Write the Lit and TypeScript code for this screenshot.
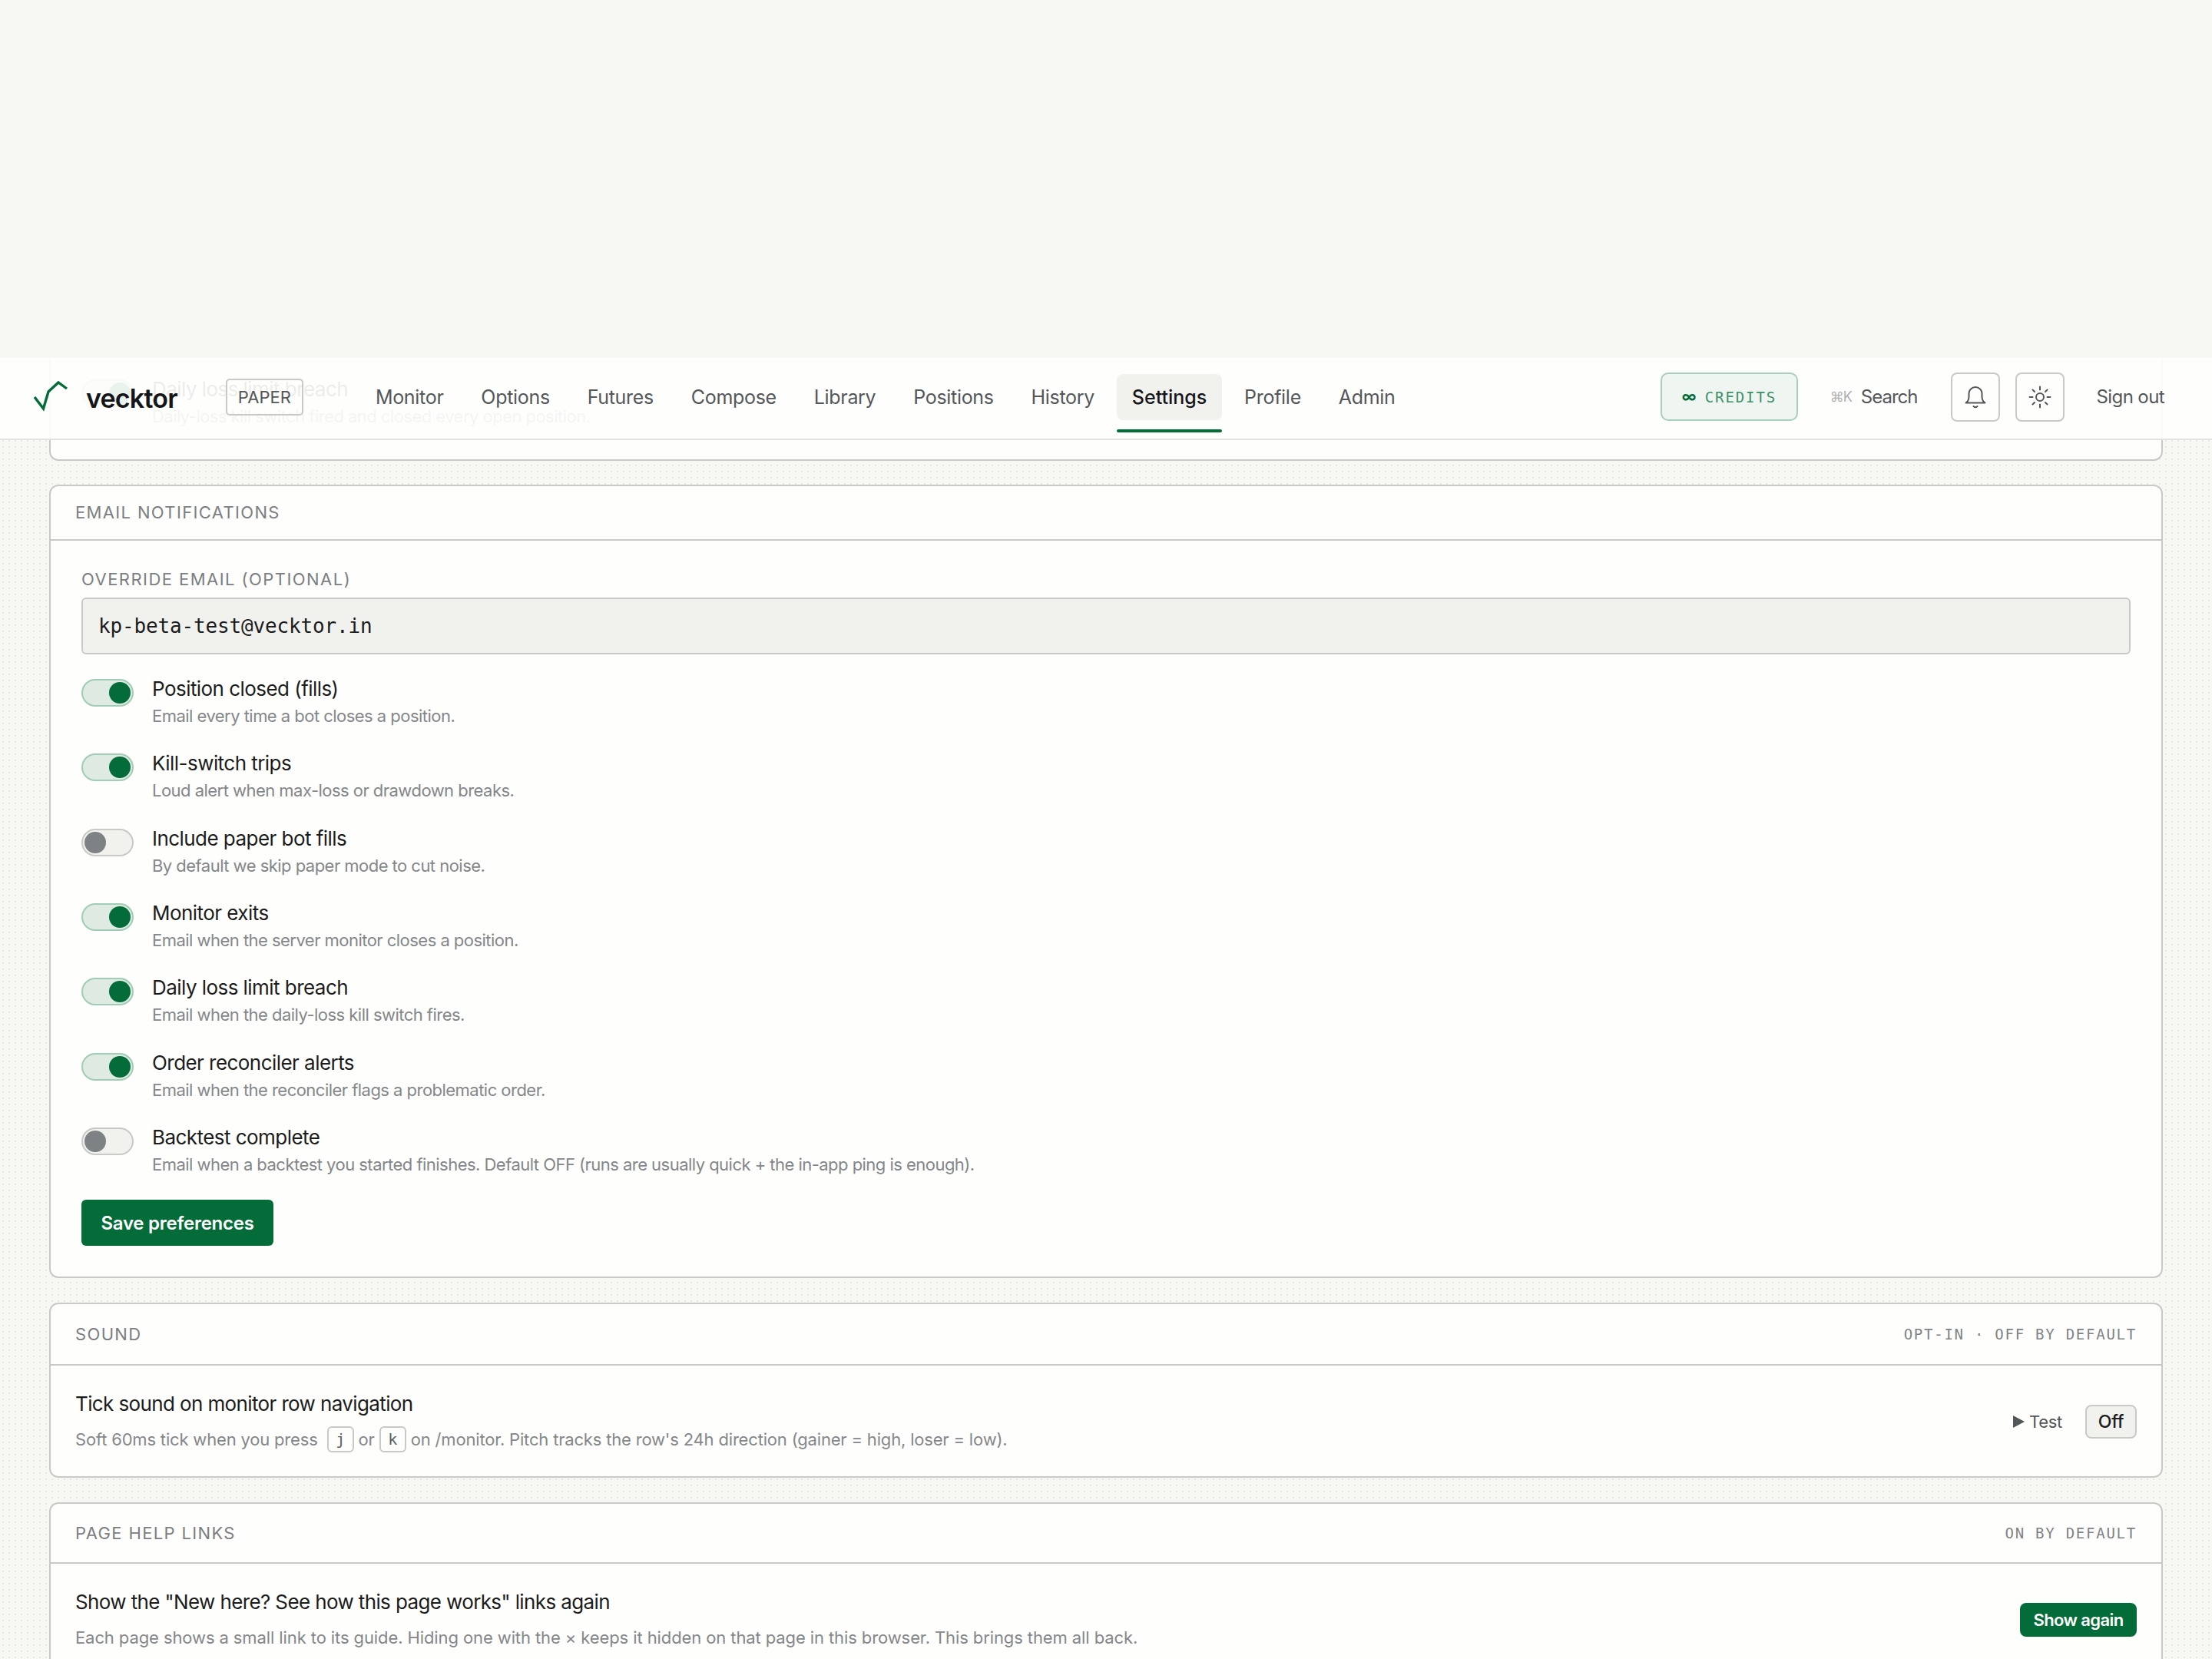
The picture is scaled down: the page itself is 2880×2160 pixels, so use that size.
import { LitElement, html, css, svg } from "lit";
import { customElement } from "lit/decorators.js";

const NAV = ["Monitor", "Options", "Futures", "Compose", "Library", "Positions", "History", "Settings", "Profile", "Admin"];

const PREFS = [
  { on: true, label: "Position closed (fills)", desc: "Email every time a bot closes a position." },
  { on: true, label: "Kill-switch trips", desc: "Loud alert when max-loss or drawdown breaks." },
  { on: false, label: "Include paper bot fills", desc: "By default we skip paper mode to cut noise." },
  { on: true, label: "Monitor exits", desc: "Email when the server monitor closes a position." },
  { on: true, label: "Daily loss limit breach", desc: "Email when the daily-loss kill switch fires." },
  { on: true, label: "Order reconciler alerts", desc: "Email when the reconciler flags a problematic order." },
  { on: false, label: "Backtest complete", desc: "Email when a backtest you started finishes. Default OFF (runs are usually quick + the in-app ping is enough)." },
];

const bell = svg`<path d="M3.5 23.5C6 22 7.5 19 7.5 15v-3.5a8.5 8.5 0 0 1 17 0V15c0 4 1.5 7 4 8.5z"/><path d="M13.5 28q2.5 2.5 5 0"/>`;
const sun = svg`<circle cx="16" cy="16" r="5"/><path d="M16 2.5v4M16 25.5v4M2.5 16h4M25.5 16h4M6.5 6.5L9 9M23 23l2.5 2.5M6.5 25.5L9 23M23 9l2.5-2.5"/>`;

@customElement("app-root")
export class AppRoot extends LitElement {
  static styles = css`
    :host {
      display: block;
      position: relative;
      width: 2880px;
      height: 2160px;
      overflow: hidden;
      background: #f7f8f4;
      font-family: Inter, "Noto Sans", sans-serif;
      color: #1c1c1c;
    }
    .spacer { height: 466px; }
    .page {
      height: 1694px;
      padding: 0 64px;
      box-sizing: border-box;
      display: flex;
      flex-direction: column;
      background-color: #f7f8f4;
      background-image: radial-gradient(circle, #e9eae6 1.2px, transparent 1.4px);
      background-size: 8px 8px;
    }
    .card {
      flex: none;
      background: #fefefc;
      border: 2px solid #c9c9c5;
      border-radius: 12px;
      box-sizing: border-box;
    }
    .card.cut {
      height: 134px;
      border-top: none;
      border-radius: 0 0 12px 12px;
      padding: 28px 0 0 40px;
      margin-bottom: 31px;
    }
    .card.email { height: 1033px; margin-bottom: 32px; }
    .card.sound { height: 228px; margin-bottom: 32px; }
    .card.help { height: 300px; }

    .head {
      display: flex;
      align-items: center;
      justify-content: space-between;
      padding: 0 32px;
      border-bottom: 2px solid #c9c9c5;
      box-sizing: border-box;
      font-size: 22px;
      letter-spacing: 1.35px;
      color: #7c7f82;
    }
    .email .head { height: 71px; padding-bottom: 2px; }
    .sound .head { height: 80px; }
    .help .head { height: 78px; }
    .meta {
      font-family: "DejaVu Sans Mono", monospace;
      font-size: 19px;
      letter-spacing: 1.75px;
      color: #808386;
    }

    .body { padding: 37px 40px 0; }
    .field-label {
      font-size: 22px;
      line-height: 26px;
      letter-spacing: 1.45px;
      color: #7c7f82;
    }
    .input {
      height: 74px;
      margin: 11px 0 32px;
      padding: 0 20px;
      display: flex;
      align-items: center;
      box-sizing: border-box;
      background: #f1f1ee;
      border: 2px solid #c9c9c5;
      border-radius: 6px;
      font-family: "DejaVu Sans Mono", monospace;
      font-size: 26px;
      letter-spacing: -0.15px;
      color: #1c1c1c;
    }
    .prefs { display: grid; grid-auto-rows: 97.33px; margin-bottom: -3px; }
    .pref { display: flex; gap: 24px; align-items: flex-start; }
    .toggle {
      flex: none;
      width: 68px;
      height: 36px;
      padding: 2px;
      display: flex;
      box-sizing: border-box;
      border-radius: 18px;
      border: 2px solid #c9c9c5;
      background: #f1f1ee;
    }
    .toggle i {
      width: 28px;
      height: 28px;
      border-radius: 50%;
      background: #7e8285;
    }
    .toggle.on {
      justify-content: flex-end;
      border-color: #a0cdb5;
      background: #dfeae3;
    }
    .toggle.on i { background: #046c38; }
    .pref-label { font-size: 26px; line-height: 32px; margin-top: -3px; letter-spacing: -0.55px; color: #1c1c1c; }
    .pref-desc { font-size: 22px; line-height: 30px; margin-top: 4px; letter-spacing: -0.53px; color: #84878a; }

    .primary {
      display: block;
      border: none;
      background: #046c38;
      color: #fff;
      font: 600 24px Inter, sans-serif;
    }
    .save { width: 250px; height: 60px; border-radius: 6px; padding: 0; letter-spacing: -0.25px; }

    .setting {
      display: flex;
      align-items: center;
      justify-content: space-between;
      padding: 32px 32px 0;
    }
    .setting-title { font-size: 26px; line-height: 32px; margin-top: 2px; letter-spacing: -0.62px; color: #1c1c1c; }
    .setting-desc {
      display: flex;
      align-items: center;
      margin-top: 12px;
      height: 36px;
      font-size: 22px;
      letter-spacing: -0.1px;
      color: #84878a;
      white-space: pre;
    }
    .sound .setting-desc { letter-spacing: -0.18px; }
    kbd {
      display: inline-flex;
      align-items: center;
      justify-content: center;
      width: 35px;
      height: 34px;
      margin: 0 6px;
      box-sizing: border-box;
      border: 2px solid #c9c9c5;
      border-radius: 6px;
      font-family: "DejaVu Sans Mono", monospace;
      font-size: 20px;
      color: #5a5d60;
    }
    .actions { display: flex; align-items: center; gap: 30px; }
    .test { display: flex; align-items: center; gap: 6px; font-size: 22px; letter-spacing: -0.3px; color: #54575a; }
    .test b {
      width: 0;
      height: 0;
      border-left: 15px solid #54575a;
      border-top: 8px solid transparent;
      border-bottom: 8px solid transparent;
    }
    .off {
      width: 67px;
      height: 44px;
      box-sizing: border-box;
      display: flex;
      align-items: center;
      justify-content: center;
      background: #f1f1ee;
      border: 2px solid #c9c9c5;
      border-radius: 8px;
      font-size: 23px;
      font-weight: 500;
      letter-spacing: -0.3px;
    }
    .again { width: 152px; height: 44px; border-radius: 8px; padding: 0; font-size: 22px; letter-spacing: -0.6px; }

    nav {
      position: absolute;
      left: 0;
      right: 0;
      top: 466px;
      height: 107px;
      box-sizing: border-box;
      background: rgba(254, 254, 252, 0.92);
      border-bottom: 2px solid #e2e2df;
      display: flex;
      align-items: center;
      padding: 0 62px 0 44px;
    }
    .logo { width: 46px; height: 40px; margin-top: -4px; flex: none; overflow: visible; }
    .brand {
      margin-left: 22px;
      font-size: 34px;
      font-weight: 600;
      letter-spacing: -0.8px;
      color: #14161a;
    }
    .badge {
      margin-left: 63px;
      width: 101px;
      height: 48px;
      margin-top: -4px;
      box-sizing: border-box;
      display: flex;
      align-items: center;
      justify-content: center;
      border: 2px solid #c9c9c5;
      border-radius: 5px;
      font-size: 22px;
      color: #54575a;
    }
    .links { display: flex; gap: 8.8px; margin-left: 74px; }
    .link {
      position: relative;
      height: 60px;
      padding: 0 20px;
      margin-top: -4px;
      display: flex;
      align-items: center;
      border-radius: 8px;
      font-size: 25px;
      letter-spacing: -0.3px;
      color: #54575a;
    }
    .link.active { background: #f1f1ee; color: #14161a; font-weight: 500; letter-spacing: 0; }
    .link.active::after {
      content: "";
      position: absolute;
      left: 0;
      right: 0;
      bottom: -16px;
      height: 4px;
      border-radius: 2px;
      background: #046c38;
    }
    .right { margin-left: auto; display: flex; align-items: center; margin-top: -4px; }
    .credits {
      width: 179px;
      height: 63px;
      box-sizing: border-box;
      display: flex;
      align-items: center;
      padding-left: 26px;
      gap: 13px;
      background: #eff5f1;
      border: 2px solid #a7cfb9;
      border-radius: 10px;
      font-family: "DejaVu Sans Mono", monospace;
      font-size: 19px;
      letter-spacing: 1.9px;
      color: #3f8f66;
    }
    .credits b { width: 17px; color: #046c38; font-family: Inter, sans-serif; font-size: 19px; font-weight: 700; letter-spacing: 0; line-height: 1; }
    .search { display: flex; align-items: center; margin-left: 42px; font-size: 24px; letter-spacing: -1px; color: #54575a; }
    .search span { color: #aeb0b2; font-size: 18px; margin-right: 12px; }
    .icon {
      width: 64px;
      height: 64px;
      box-sizing: border-box;
      display: flex;
      align-items: center;
      justify-content: center;
      border: 2px solid #c9c9c5;
      border-radius: 8px;
    }
    .icon svg { width: 32px; height: 32px; fill: none; stroke: #54575a; stroke-width: 2; stroke-linecap: round; stroke-linejoin: round; }
    .bell { margin-left: 43px; }
    .sun { margin-left: 20px; }
    .signout { margin-left: 42px; font-size: 24px; letter-spacing: -0.6px; color: #54575a; white-space: nowrap; }
  `;

  render() {
    return html`
      <div class="spacer"></div>
      <div class="page">
        <section class="card cut">
          <div class="pref">
            <div class="toggle on"><i></i></div>
            <div>
              <div class="pref-label">Daily loss limit breach</div>
              <div class="pref-desc">Daily-loss kill switch fired and closed every open position.</div>
            </div>
          </div>
        </section>

        <section class="card email">
          <div class="head"><span>EMAIL NOTIFICATIONS</span></div>
          <div class="body">
            <div class="field-label">OVERRIDE EMAIL (OPTIONAL)</div>
            <div class="input">kp-beta-test@vecktor.in</div>
            <div class="prefs">
              ${PREFS.map(
                (p) => html`
                  <div class="pref">
                    <div class="toggle ${p.on ? "on" : ""}"><i></i></div>
                    <div>
                      <div class="pref-label">${p.label}</div>
                      <div class="pref-desc">${p.desc}</div>
                    </div>
                  </div>
                `
              )}
            </div>
            <button class="primary save">Save preferences</button>
          </div>
        </section>

        <section class="card sound">
          <div class="head"><span>SOUND</span><span class="meta">OPT-IN · OFF BY DEFAULT</span></div>
          <div class="setting">
            <div>
              <div class="setting-title">Tick sound on monitor row navigation</div>
              <div class="setting-desc">Soft 60ms tick when you press <kbd>j</kbd>or<kbd>k</kbd>on /monitor. Pitch tracks the row's 24h direction (gainer = high, loser = low).</div>
            </div>
            <div class="actions">
              <span class="test"><b></b>Test</span>
              <span class="off">Off</span>
            </div>
          </div>
        </section>

        <section class="card help">
          <div class="head"><span>PAGE HELP LINKS</span><span class="meta">ON BY DEFAULT</span></div>
          <div class="setting">
            <div>
              <div class="setting-title">Show the "New here? See how this page works" links again</div>
              <div class="setting-desc">Each page shows a small link to its guide. Hiding one with the × keeps it hidden on that page in this browser. This brings them all back.</div>
            </div>
            <button class="primary again">Show again</button>
          </div>
        </section>
      </div>

      <nav>
        <svg class="logo" viewBox="0 0 46 40" fill="none" stroke="#046c38" stroke-width="3.4">
          <path d="M1 20 L12.5 35 L19 13 L32 1 L43 9" />
        </svg>
        <span class="brand">vecktor</span>
        <span class="badge">PAPER</span>
        <div class="links">
          ${NAV.map((n) => html`<div class="link ${n === "Settings" ? "active" : ""}">${n}</div>`)}
        </div>
        <div class="right">
          <div class="credits"><b>∞</b>CREDITS</div>
          <div class="search"><span>⌘K</span>Search</div>
          <div class="icon bell"><svg viewBox="0 0 32 32">${bell}</svg></div>
          <div class="icon sun"><svg viewBox="0 0 32 32">${sun}</svg></div>
          <div class="signout">Sign out</div>
        </div>
      </nav>
    `;
  }
}
